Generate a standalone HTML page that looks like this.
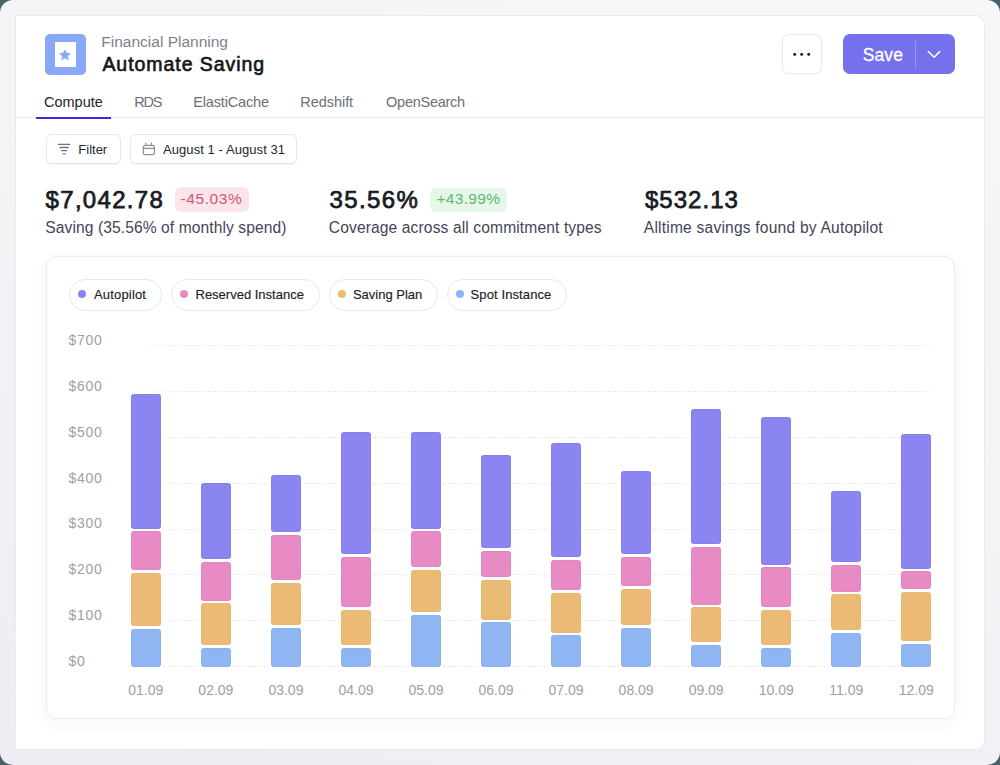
<!DOCTYPE html><html><head><meta charset="utf-8"><style>
html,body{margin:0;padding:0;width:1000px;height:765px;overflow:hidden;background:#4a6169;}
.t{position:absolute;white-space:nowrap;line-height:1;font-family:"Liberation Sans", sans-serif;}
#frame{position:absolute;left:0;top:0;width:1000px;height:765px;border-radius:13px;background:linear-gradient(200deg,#f7f7f9 0%,#f3f3f6 50%,#eeedf4 100%);overflow:hidden}
</style></head><body>
<div id="frame">
<div style="position:absolute;left:15px;top:15px;width:968px;height:733px;background:#fff;border:1px solid #e9eaee;border-radius:0 10px 10px 0;"></div>
<div style="position:absolute;left:45px;top:34px;width:41px;height:41px;background:#89a8f8;border-radius:5px;"></div>
<div style="position:absolute;left:55px;top:41.5px;width:21px;height:25.5px;background:#fff;"></div>
<svg style="position:absolute;left:59.3px;top:48.9px" width="12" height="12" viewBox="0 0 12 12"><path fill="#89a8f8" stroke="#89a8f8" stroke-width="0.6" stroke-linejoin="round" d="M6.00,0.70 L7.59,4.12 L11.33,4.57 L8.57,7.13 L9.29,10.83 L6.00,9.00 L2.71,10.83 L3.43,7.13 L0.67,4.57 L4.41,4.12Z"/></svg>
<div class="t" style="left:101.30px;top:33.58px;font-size:15.5px;color:#7e818c;font-weight:400;letter-spacing:0.0px;">Financial Planning</div>
<div class="t" style="left:102.40px;top:55.09px;font-size:19.5px;color:#15161b;font-weight:400;letter-spacing:0.95px;-webkit-text-stroke:0.65px #15161b;">Automate Saving</div>
<div style="position:absolute;left:781.8px;top:34.1px;width:37.8px;height:38.2px;background:#fff;border:1px solid #e8e9ed;border-radius:7px;box-shadow:0 1px 3px rgba(0,0,0,0.04);"></div>
<svg style="position:absolute;left:790px;top:50px" width="24" height="9" viewBox="0 0 24 9"><circle cx="4.7" cy="4.4" r="1.45" fill="#111"/><circle cx="11.7" cy="4.4" r="1.45" fill="#111"/><circle cx="18.7" cy="4.4" r="1.45" fill="#111"/></svg>
<div style="position:absolute;left:842.5px;top:34px;width:112px;height:40.3px;background:#7570eb;border-radius:7px;"></div>
<div class="t" style="left:862.70px;top:46.69px;font-size:17.5px;color:#ffffff;font-weight:400;letter-spacing:0.1px;-webkit-text-stroke:0.3px #ffffff;">Save</div>
<div style="position:absolute;left:914.5px;top:41px;width:1px;height:26.5px;background:#9a95f2;"></div>
<svg style="position:absolute;left:926px;top:49px" width="16" height="11" viewBox="0 0 16 11"><path d="M2.3 2.5 L8.2 8.3 L13.7 2.5" fill="none" stroke="#fff" stroke-width="1.55" stroke-linecap="round" stroke-linejoin="round"/></svg>
<div class="t" style="left:44.00px;top:94.93px;font-size:14.5px;color:#23252c;font-weight:400;letter-spacing:0px;">Compute</div>
<div class="t" style="left:134.30px;top:94.93px;font-size:14.5px;color:#6c6f79;font-weight:400;letter-spacing:-1.2px;">RDS</div>
<div class="t" style="left:193.20px;top:94.93px;font-size:14.5px;color:#6c6f79;font-weight:400;letter-spacing:-0.15px;">ElastiCache</div>
<div class="t" style="left:300.30px;top:94.93px;font-size:14.5px;color:#6c6f79;font-weight:400;letter-spacing:-0.05px;">Redshift</div>
<div class="t" style="left:386.10px;top:94.93px;font-size:14.5px;color:#6c6f79;font-weight:400;letter-spacing:-0.27px;">OpenSearch</div>
<div style="position:absolute;left:16px;top:117px;width:968px;height:1px;background:#e8e9ed;"></div>
<div style="position:absolute;left:36px;top:116.5px;width:75px;height:2px;background:#4424ee;"></div>
<div style="position:absolute;left:45.5px;top:134.3px;width:73.5px;height:28px;background:#fff;border:1px solid #e6e7eb;border-radius:6px;box-shadow:0 1px 2px rgba(0,0,0,0.04);"></div>
<svg style="position:absolute;left:57px;top:142px" width="15" height="14" viewBox="0 0 15 14"><path d="M1.4 2.3h11.4M3 5.5h8.2M4.6 8.6h5M6.2 11.8h1.8" stroke="#6f727d" stroke-width="1.3" stroke-linecap="round"/></svg>
<div class="t" style="left:78.30px;top:143.20px;font-size:13px;color:#24262d;font-weight:400;letter-spacing:0px;">Filter</div>
<div style="position:absolute;left:129.7px;top:134.3px;width:165.5px;height:28px;background:#fff;border:1px solid #e6e7eb;border-radius:6px;box-shadow:0 1px 2px rgba(0,0,0,0.04);"></div>
<svg style="position:absolute;left:141px;top:142px" width="15" height="14" viewBox="0 0 15 14"><rect x="2.4" y="3.3" width="11" height="9.4" rx="1.8" fill="none" stroke="#8d909a" stroke-width="1.25"/><path d="M2.4 6.4h11M4.8 1.2v2.1M10.4 1.2v2.1" stroke="#8d909a" stroke-width="1.25" stroke-linecap="round"/></svg>
<div class="t" style="left:163.00px;top:143.20px;font-size:13px;color:#24262d;font-weight:400;letter-spacing:0.07px;">August 1 - August 31</div>
<div class="t" style="left:45.60px;top:187.68px;font-size:24px;color:#191b24;font-weight:400;letter-spacing:1.3px;-webkit-text-stroke:0.75px #191b24;">$7,042.78</div>
<div style="position:absolute;left:175.3px;top:187.3px;width:73.8px;height:24.6px;background:#f9e5ea;border-radius:6px;"></div>
<div class="t" style="left:180.40px;top:191.38px;font-size:15.5px;color:#d25679;font-weight:400;letter-spacing:0.62px;">-45.03%</div>
<div class="t" style="left:45.30px;top:220.39px;font-size:15.6px;color:#434657;font-weight:400;letter-spacing:0.09px;">Saving (35.56% of monthly spend)</div>
<div class="t" style="left:329.60px;top:187.68px;font-size:24px;color:#191b24;font-weight:400;letter-spacing:1.35px;-webkit-text-stroke:0.75px #191b24;">35.56%</div>
<div style="position:absolute;left:430.4px;top:187.5px;width:76.5px;height:24.6px;background:#e6f6e9;border-radius:6px;"></div>
<div class="t" style="left:436.50px;top:191.38px;font-size:15.5px;color:#5fb96f;font-weight:400;letter-spacing:0.3px;">+43.99%</div>
<div class="t" style="left:328.80px;top:220.39px;font-size:15.6px;color:#434657;font-weight:400;letter-spacing:0.12px;">Coverage across all commitment types</div>
<div class="t" style="left:644.90px;top:187.68px;font-size:24px;color:#191b24;font-weight:400;letter-spacing:1.05px;-webkit-text-stroke:0.75px #191b24;">$532.13</div>
<div class="t" style="left:643.80px;top:220.39px;font-size:15.6px;color:#434657;font-weight:400;letter-spacing:0.2px;">Alltime savings found by Autopilot</div>
<div style="position:absolute;left:45.5px;top:256.3px;width:907.5px;height:460.8px;background:#fff;border:1px solid #eaebee;border-radius:11px;box-shadow:0 4px 16px rgba(50,40,40,0.045);"></div>
<div style="position:absolute;left:68.5px;top:279.2px;width:91.7px;height:29.5px;background:#fff;border:1px solid #e8e9ed;border-radius:16px;"></div>
<div style="position:absolute;left:78.0px;top:290px;width:8px;height:8px;background:#8a84f2;border-radius:50%;"></div>
<div class="t" style="left:94.00px;top:288.30px;font-size:13px;color:#1f2129;font-weight:400;letter-spacing:0.17px;-webkit-text-stroke:0.15px #1f2129;">Autopilot</div>
<div style="position:absolute;left:170.8px;top:279.2px;width:147.2px;height:29.5px;background:#fff;border:1px solid #e8e9ed;border-radius:16px;"></div>
<div style="position:absolute;left:180.3px;top:290px;width:8px;height:8px;background:#e88bc4;border-radius:50%;"></div>
<div class="t" style="left:195.50px;top:288.30px;font-size:13px;color:#1f2129;font-weight:400;letter-spacing:0px;-webkit-text-stroke:0.15px #1f2129;">Reserved Instance</div>
<div style="position:absolute;left:328.6px;top:279.2px;width:107px;height:29.5px;background:#fff;border:1px solid #e8e9ed;border-radius:16px;"></div>
<div style="position:absolute;left:338.1px;top:290px;width:8px;height:8px;background:#ebbb74;border-radius:50%;"></div>
<div class="t" style="left:352.90px;top:288.30px;font-size:13px;color:#1f2129;font-weight:400;letter-spacing:0px;-webkit-text-stroke:0.15px #1f2129;">Saving Plan</div>
<div style="position:absolute;left:446.5px;top:279.2px;width:118.8px;height:29.5px;background:#fff;border:1px solid #e8e9ed;border-radius:16px;"></div>
<div style="position:absolute;left:456.0px;top:290px;width:8px;height:8px;background:#8fb4f4;border-radius:50%;"></div>
<div class="t" style="left:470.60px;top:288.30px;font-size:13px;color:#1f2129;font-weight:400;letter-spacing:0.1px;-webkit-text-stroke:0.15px #1f2129;">Spot Instance</div>
<div style="position:absolute;left:128px;top:666.10px;width:801px;height:1px;background-image:repeating-linear-gradient(90deg,#e9eaee 0 3px,transparent 3px 5px);-webkit-mask-image:linear-gradient(90deg,transparent 0,#000 60px);"></div>
<div class="t" style="left:68.60px;top:653.95px;font-size:14px;color:#9da0ab;font-weight:400;letter-spacing:0.7px;">$0</div>
<div style="position:absolute;left:128px;top:620.24px;width:801px;height:1px;background-image:repeating-linear-gradient(90deg,#e9eaee 0 3px,transparent 3px 5px);-webkit-mask-image:linear-gradient(90deg,transparent 0,#000 60px);"></div>
<div class="t" style="left:68.60px;top:608.09px;font-size:14px;color:#9da0ab;font-weight:400;letter-spacing:0.7px;">$100</div>
<div style="position:absolute;left:128px;top:574.38px;width:801px;height:1px;background-image:repeating-linear-gradient(90deg,#e9eaee 0 3px,transparent 3px 5px);-webkit-mask-image:linear-gradient(90deg,transparent 0,#000 60px);"></div>
<div class="t" style="left:68.60px;top:562.23px;font-size:14px;color:#9da0ab;font-weight:400;letter-spacing:0.7px;">$200</div>
<div style="position:absolute;left:128px;top:528.52px;width:801px;height:1px;background-image:repeating-linear-gradient(90deg,#e9eaee 0 3px,transparent 3px 5px);-webkit-mask-image:linear-gradient(90deg,transparent 0,#000 60px);"></div>
<div class="t" style="left:68.60px;top:516.37px;font-size:14px;color:#9da0ab;font-weight:400;letter-spacing:0.7px;">$300</div>
<div style="position:absolute;left:128px;top:482.66px;width:801px;height:1px;background-image:repeating-linear-gradient(90deg,#e9eaee 0 3px,transparent 3px 5px);-webkit-mask-image:linear-gradient(90deg,transparent 0,#000 60px);"></div>
<div class="t" style="left:68.60px;top:470.51px;font-size:14px;color:#9da0ab;font-weight:400;letter-spacing:0.7px;">$400</div>
<div style="position:absolute;left:128px;top:436.80px;width:801px;height:1px;background-image:repeating-linear-gradient(90deg,#e9eaee 0 3px,transparent 3px 5px);-webkit-mask-image:linear-gradient(90deg,transparent 0,#000 60px);"></div>
<div class="t" style="left:68.60px;top:424.65px;font-size:14px;color:#9da0ab;font-weight:400;letter-spacing:0.7px;">$500</div>
<div style="position:absolute;left:128px;top:390.94px;width:801px;height:1px;background-image:repeating-linear-gradient(90deg,#e9eaee 0 3px,transparent 3px 5px);-webkit-mask-image:linear-gradient(90deg,transparent 0,#000 60px);"></div>
<div class="t" style="left:68.60px;top:378.79px;font-size:14px;color:#9da0ab;font-weight:400;letter-spacing:0.7px;">$600</div>
<div style="position:absolute;left:128px;top:345.08px;width:801px;height:1px;background-image:repeating-linear-gradient(90deg,#e9eaee 0 3px,transparent 3px 5px);-webkit-mask-image:linear-gradient(90deg,transparent 0,#000 60px);"></div>
<div class="t" style="left:68.60px;top:332.93px;font-size:14px;color:#9da0ab;font-weight:400;letter-spacing:0.7px;">$700</div>
<div style="position:absolute;left:129.2px;top:392.6px;width:33.3px;height:275.3px;background:#fff;"></div>
<div style="position:absolute;left:130.7px;top:394.1px;width:28.3px;height:132.5px;background:#8b85f1;border:1px solid #857ff0;border-radius:2.5px;"></div>
<div style="position:absolute;left:130.7px;top:531.3px;width:28.3px;height:36.7px;background:#e88bc5;border:1px solid #e485c2;border-radius:2.5px;"></div>
<div style="position:absolute;left:130.7px;top:572.7px;width:28.3px;height:51.6px;background:#ebbb75;border:1px solid #e9b76e;border-radius:2.5px;"></div>
<div style="position:absolute;left:130.7px;top:628.7px;width:28.3px;height:36.3px;background:#8fb5f3;border:1px solid #8ab1f2;border-radius:2.5px;"></div>
<div class="t" style="left:45.85px;width:200px;text-align:center;top:683.35px;font-size:14px;color:#9da0ab;font-weight:400;letter-spacing:0px">01.09</div>
<div style="position:absolute;left:199.24px;top:481.8px;width:33.3px;height:186.1px;background:#fff;"></div>
<div style="position:absolute;left:200.74px;top:483.3px;width:28.3px;height:74.2px;background:#8b85f1;border:1px solid #857ff0;border-radius:2.5px;"></div>
<div style="position:absolute;left:200.74px;top:562.2px;width:28.3px;height:36.5px;background:#e88bc5;border:1px solid #e485c2;border-radius:2.5px;"></div>
<div style="position:absolute;left:200.74px;top:603.1px;width:28.3px;height:40.1px;background:#ebbb75;border:1px solid #e9b76e;border-radius:2.5px;"></div>
<div style="position:absolute;left:200.74px;top:647.8px;width:28.3px;height:17.2px;background:#8fb5f3;border:1px solid #8ab1f2;border-radius:2.5px;"></div>
<div class="t" style="left:115.89px;width:200px;text-align:center;top:683.35px;font-size:14px;color:#9da0ab;font-weight:400;letter-spacing:0px">02.09</div>
<div style="position:absolute;left:269.28px;top:473.0px;width:33.3px;height:194.9px;background:#fff;"></div>
<div style="position:absolute;left:270.78px;top:474.5px;width:28.3px;height:55.9px;background:#8b85f1;border:1px solid #857ff0;border-radius:2.5px;"></div>
<div style="position:absolute;left:270.78px;top:535.1px;width:28.3px;height:43.4px;background:#e88bc5;border:1px solid #e485c2;border-radius:2.5px;"></div>
<div style="position:absolute;left:270.78px;top:582.7px;width:28.3px;height:40.5px;background:#ebbb75;border:1px solid #e9b76e;border-radius:2.5px;"></div>
<div style="position:absolute;left:270.78px;top:627.7px;width:28.3px;height:37.3px;background:#8fb5f3;border:1px solid #8ab1f2;border-radius:2.5px;"></div>
<div class="t" style="left:185.93px;width:200px;text-align:center;top:683.35px;font-size:14px;color:#9da0ab;font-weight:400;letter-spacing:0px">03.09</div>
<div style="position:absolute;left:339.32px;top:430.8px;width:33.3px;height:237.1px;background:#fff;"></div>
<div style="position:absolute;left:340.82px;top:432.3px;width:28.3px;height:120.0px;background:#8b85f1;border:1px solid #857ff0;border-radius:2.5px;"></div>
<div style="position:absolute;left:340.82px;top:557.1px;width:28.3px;height:47.9px;background:#e88bc5;border:1px solid #e485c2;border-radius:2.5px;"></div>
<div style="position:absolute;left:340.82px;top:609.6px;width:28.3px;height:33.6px;background:#ebbb75;border:1px solid #e9b76e;border-radius:2.5px;"></div>
<div style="position:absolute;left:340.82px;top:647.8px;width:28.3px;height:17.2px;background:#8fb5f3;border:1px solid #8ab1f2;border-radius:2.5px;"></div>
<div class="t" style="left:255.97px;width:200px;text-align:center;top:683.35px;font-size:14px;color:#9da0ab;font-weight:400;letter-spacing:0px">04.09</div>
<div style="position:absolute;left:409.36px;top:430.8px;width:33.3px;height:237.1px;background:#fff;"></div>
<div style="position:absolute;left:410.86px;top:432.3px;width:28.3px;height:94.3px;background:#8b85f1;border:1px solid #857ff0;border-radius:2.5px;"></div>
<div style="position:absolute;left:410.86px;top:531.3px;width:28.3px;height:33.8px;background:#e88bc5;border:1px solid #e485c2;border-radius:2.5px;"></div>
<div style="position:absolute;left:410.86px;top:569.7px;width:28.3px;height:40.3px;background:#ebbb75;border:1px solid #e9b76e;border-radius:2.5px;"></div>
<div style="position:absolute;left:410.86px;top:614.9px;width:28.3px;height:50.1px;background:#8fb5f3;border:1px solid #8ab1f2;border-radius:2.5px;"></div>
<div class="t" style="left:326.01px;width:200px;text-align:center;top:683.35px;font-size:14px;color:#9da0ab;font-weight:400;letter-spacing:0px">05.09</div>
<div style="position:absolute;left:479.4px;top:453.5px;width:33.3px;height:214.4px;background:#fff;"></div>
<div style="position:absolute;left:480.9px;top:455.0px;width:28.3px;height:91.0px;background:#8b85f1;border:1px solid #857ff0;border-radius:2.5px;"></div>
<div style="position:absolute;left:480.9px;top:550.6px;width:28.3px;height:24.8px;background:#e88bc5;border:1px solid #e485c2;border-radius:2.5px;"></div>
<div style="position:absolute;left:480.9px;top:580.2px;width:28.3px;height:37.8px;background:#ebbb75;border:1px solid #e9b76e;border-radius:2.5px;"></div>
<div style="position:absolute;left:480.9px;top:622.2px;width:28.3px;height:42.8px;background:#8fb5f3;border:1px solid #8ab1f2;border-radius:2.5px;"></div>
<div class="t" style="left:396.05px;width:200px;text-align:center;top:683.35px;font-size:14px;color:#9da0ab;font-weight:400;letter-spacing:0px">06.09</div>
<div style="position:absolute;left:549.44px;top:441.1px;width:33.3px;height:226.8px;background:#fff;"></div>
<div style="position:absolute;left:550.94px;top:442.6px;width:28.3px;height:112.4px;background:#8b85f1;border:1px solid #857ff0;border-radius:2.5px;"></div>
<div style="position:absolute;left:550.94px;top:559.6px;width:28.3px;height:28.6px;background:#e88bc5;border:1px solid #e485c2;border-radius:2.5px;"></div>
<div style="position:absolute;left:550.94px;top:592.8px;width:28.3px;height:37.8px;background:#ebbb75;border:1px solid #e9b76e;border-radius:2.5px;"></div>
<div style="position:absolute;left:550.94px;top:634.8px;width:28.3px;height:30.2px;background:#8fb5f3;border:1px solid #8ab1f2;border-radius:2.5px;"></div>
<div class="t" style="left:466.09px;width:200px;text-align:center;top:683.35px;font-size:14px;color:#9da0ab;font-weight:400;letter-spacing:0px">07.09</div>
<div style="position:absolute;left:619.48px;top:469.2px;width:33.3px;height:198.7px;background:#fff;"></div>
<div style="position:absolute;left:620.98px;top:470.7px;width:28.3px;height:81.6px;background:#8b85f1;border:1px solid #857ff0;border-radius:2.5px;"></div>
<div style="position:absolute;left:620.98px;top:556.9px;width:28.3px;height:27.5px;background:#e88bc5;border:1px solid #e485c2;border-radius:2.5px;"></div>
<div style="position:absolute;left:620.98px;top:589.0px;width:28.3px;height:33.8px;background:#ebbb75;border:1px solid #e9b76e;border-radius:2.5px;"></div>
<div style="position:absolute;left:620.98px;top:627.5px;width:28.3px;height:37.5px;background:#8fb5f3;border:1px solid #8ab1f2;border-radius:2.5px;"></div>
<div class="t" style="left:536.13px;width:200px;text-align:center;top:683.35px;font-size:14px;color:#9da0ab;font-weight:400;letter-spacing:0px">08.09</div>
<div style="position:absolute;left:689.52px;top:407.9px;width:33.3px;height:260.0px;background:#fff;"></div>
<div style="position:absolute;left:691.02px;top:409.4px;width:28.3px;height:132.6px;background:#8b85f1;border:1px solid #857ff0;border-radius:2.5px;"></div>
<div style="position:absolute;left:691.02px;top:546.6px;width:28.3px;height:56.1px;background:#e88bc5;border:1px solid #e485c2;border-radius:2.5px;"></div>
<div style="position:absolute;left:691.02px;top:606.9px;width:28.3px;height:33.6px;background:#ebbb75;border:1px solid #e9b76e;border-radius:2.5px;"></div>
<div style="position:absolute;left:691.02px;top:645.1px;width:28.3px;height:19.9px;background:#8fb5f3;border:1px solid #8ab1f2;border-radius:2.5px;"></div>
<div class="t" style="left:606.17px;width:200px;text-align:center;top:683.35px;font-size:14px;color:#9da0ab;font-weight:400;letter-spacing:0px">09.09</div>
<div style="position:absolute;left:759.56px;top:415.5px;width:33.3px;height:252.4px;background:#fff;"></div>
<div style="position:absolute;left:761.06px;top:417.0px;width:28.3px;height:145.8px;background:#8b85f1;border:1px solid #857ff0;border-radius:2.5px;"></div>
<div style="position:absolute;left:761.06px;top:567.0px;width:28.3px;height:38.0px;background:#e88bc5;border:1px solid #e485c2;border-radius:2.5px;"></div>
<div style="position:absolute;left:761.06px;top:609.6px;width:28.3px;height:33.6px;background:#ebbb75;border:1px solid #e9b76e;border-radius:2.5px;"></div>
<div style="position:absolute;left:761.06px;top:647.8px;width:28.3px;height:17.2px;background:#8fb5f3;border:1px solid #8ab1f2;border-radius:2.5px;"></div>
<div class="t" style="left:676.21px;width:200px;text-align:center;top:683.35px;font-size:14px;color:#9da0ab;font-weight:400;letter-spacing:0px">10.09</div>
<div style="position:absolute;left:829.6px;top:489.4px;width:33.3px;height:178.5px;background:#fff;"></div>
<div style="position:absolute;left:831.1px;top:490.9px;width:28.3px;height:69.3px;background:#8b85f1;border:1px solid #857ff0;border-radius:2.5px;"></div>
<div style="position:absolute;left:831.1px;top:564.5px;width:28.3px;height:25.4px;background:#e88bc5;border:1px solid #e485c2;border-radius:2.5px;"></div>
<div style="position:absolute;left:831.1px;top:594.3px;width:28.3px;height:33.8px;background:#ebbb75;border:1px solid #e9b76e;border-radius:2.5px;"></div>
<div style="position:absolute;left:831.1px;top:632.7px;width:28.3px;height:32.3px;background:#8fb5f3;border:1px solid #8ab1f2;border-radius:2.5px;"></div>
<div class="t" style="left:746.25px;width:200px;text-align:center;top:683.35px;font-size:14px;color:#9da0ab;font-weight:400;letter-spacing:0px">11.09</div>
<div style="position:absolute;left:899.64px;top:432.0px;width:33.3px;height:235.9px;background:#fff;"></div>
<div style="position:absolute;left:901.14px;top:433.5px;width:28.3px;height:133.0px;background:#8b85f1;border:1px solid #857ff0;border-radius:2.5px;"></div>
<div style="position:absolute;left:901.14px;top:570.8px;width:28.3px;height:16.3px;background:#e88bc5;border:1px solid #e485c2;border-radius:2.5px;"></div>
<div style="position:absolute;left:901.14px;top:591.8px;width:28.3px;height:47.4px;background:#ebbb75;border:1px solid #e9b76e;border-radius:2.5px;"></div>
<div style="position:absolute;left:901.14px;top:643.9px;width:28.3px;height:21.1px;background:#8fb5f3;border:1px solid #8ab1f2;border-radius:2.5px;"></div>
<div class="t" style="left:816.29px;width:200px;text-align:center;top:683.35px;font-size:14px;color:#9da0ab;font-weight:400;letter-spacing:0px">12.09</div>
</div></body></html>
